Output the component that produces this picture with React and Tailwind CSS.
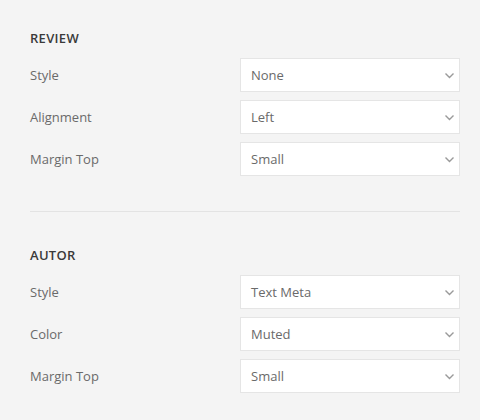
import React from 'react'

const Chevron = () => (
  <svg width="11" height="7" viewBox="0 0 11 7" fill="none" className="shrink-0">
    <path d="M1.5 1.5l4 4 4-4" stroke="#9a9a9a" strokeWidth="1.4" />
  </svg>
)

const Row = ({ label, value }) => (
  <div className="flex items-center h-[34px]">
    <div className="w-[210px] text-[13px] text-[#6a6a6a] pt-[2px]">{label}</div>
    <div className="flex-1 h-full flex items-center justify-between bg-white border border-[#e5e5e5] pl-[10px] pr-[4px]">
      <span className="text-[13px] text-[#6a6a6a] pt-[2px]">{value}</span>
      <Chevron />
    </div>
  </div>
)

const Section = ({ title, rows }) => (
  <div>
    <h3 className="text-[13px] leading-[20px] font-semibold uppercase text-[#3a3a3a] tracking-[0.3px] mb-[10px]">{title}</h3>
    <div className="flex flex-col gap-[8px]">
      {rows.map(([l, v]) => (
        <Row key={l} label={l} value={v} />
      ))}
    </div>
  </div>
)

export default function App() {
  return (
    <div className="w-[480px] h-[420px] bg-[#f4f4f4] pl-[30px] pr-[20px] pt-[28px]" style={{ fontFamily: '"Open Sans", sans-serif' }}>
      <Section
        title="Review"
        rows={[
          ['Style', 'None'],
          ['Alignment', 'Left'],
          ['Margin Top', 'Small'],
        ]}
      />
      <hr className="border-0 border-t border-[#e3e3e3] mt-[35px] mb-[33px]" />
      <Section
        title="Autor"
        rows={[
          ['Style', 'Text Meta'],
          ['Color', 'Muted'],
          ['Margin Top', 'Small'],
        ]}
      />
    </div>
  )
}
